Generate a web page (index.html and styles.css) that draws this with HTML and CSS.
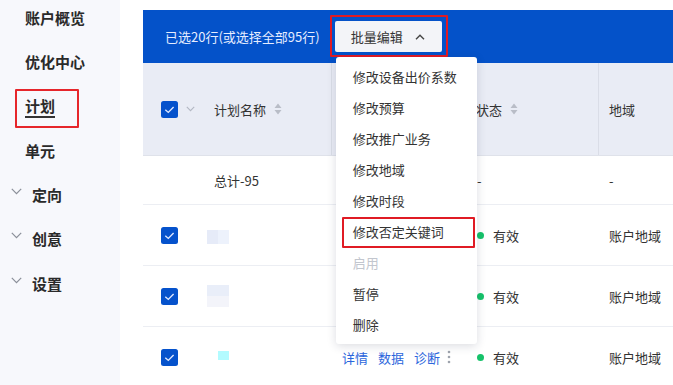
FILE: index.html
```html
<!DOCTYPE html>
<html lang="zh-CN">
<head>
<meta charset="utf-8">
<title>计划</title>
<link rel="stylesheet" href="styles.css">
</head>
<body>
<div class="app">
  <aside class="sidebar">
    <div class="nav-item">账户概览</div>
    <div class="nav-item">优化中心</div>
    <div class="nav-item"><span class="nav-label active">计划</span></div>
    <div class="nav-item">单元</div>
    <div class="nav-item group"><svg class="chev" width="11" height="7" viewBox="0 0 11 7"><path d="M0.8 0.8 L5.5 5.6 L10.2 0.8" fill="none" stroke="#8a8f99" stroke-width="1.2"/></svg>定向</div>
    <div class="nav-item group"><svg class="chev" width="11" height="7" viewBox="0 0 11 7"><path d="M0.8 0.8 L5.5 5.6 L10.2 0.8" fill="none" stroke="#8a8f99" stroke-width="1.2"/></svg>创意</div>
    <div class="nav-item group"><svg class="chev" width="11" height="7" viewBox="0 0 11 7"><path d="M0.8 0.8 L5.5 5.6 L10.2 0.8" fill="none" stroke="#8a8f99" stroke-width="1.2"/></svg>设置</div>
  </aside>

  <main class="main">
    <div class="toolbar">
      <span class="sel-text">已选20行(或选择全部95行)</span>
      <div class="batch">
        <button class="batch-btn">批量编辑<svg class="up" width="10" height="6" viewBox="0 0 10 6"><path d="M1 5.2 L5 1.2 L9 5.2" fill="none" stroke="#444" stroke-width="1.4"/></svg></button>
        <ul class="menu">
          <li class="menu-item">修改设备出价系数</li>
          <li class="menu-item">修改预算</li>
          <li class="menu-item">修改推广业务</li>
          <li class="menu-item">修改地域</li>
          <li class="menu-item">修改时段</li>
          <li class="menu-item marked">修改否定关键词</li>
          <li class="menu-item disabled">启用</li>
          <li class="menu-item">暂停</li>
          <li class="menu-item">删除</li>
        </ul>
      </div>
    </div>

    <div class="table">
      <div class="row head">
        <div class="cell check-cell">
          <svg class="cb" width="17" height="17" viewBox="0 0 17 17"><rect width="17" height="17" rx="2.5" fill="#0552cc"/><path d="M4.3 8.7 L7.3 11.4 L12.6 5.9" fill="none" stroke="#dfe8ff" stroke-width="1.4"/></svg>
          <svg class="cb-chev" width="9" height="6" viewBox="0 0 9 6"><path d="M0.8 0.8 L4.5 4.6 L8.2 0.8" fill="none" stroke="#b3b8c3" stroke-width="1.1"/></svg>
        </div>
        <div class="cell name divider">计划名称<svg class="sort" width="8" height="12" viewBox="0 0 8 12"><path d="M4 0.5 L7.5 5 H0.5 Z M4 11.5 L7.5 7 H0.5 Z" fill="#b9bdc7"/></svg></div>
        <div class="cell ops"></div>
        <div class="cell status divider"><span class="head-status">状态</span><svg class="sort" width="8" height="12" viewBox="0 0 8 12"><path d="M4 0.5 L7.5 5 H0.5 Z M4 11.5 L7.5 7 H0.5 Z" fill="#b9bdc7"/></svg></div>
        <div class="cell region">地域</div>
      </div>

      <div class="row total">
        <div class="cell check-cell"></div>
        <div class="cell name">总计-95</div>
        <div class="cell ops"></div>
        <div class="cell status">-</div>
        <div class="cell region">-</div>
      </div>

      <div class="row data">
        <div class="cell check-cell"><svg class="cb" width="17" height="17" viewBox="0 0 17 17"><rect width="17" height="17" rx="2.5" fill="#0552cc"/><path d="M4.3 8.7 L7.3 11.4 L12.6 5.9" fill="none" stroke="#dfe8ff" stroke-width="1.4"/></svg></div>
        <div class="cell name blurred"><span class="blur b1"></span></div>
        <div class="cell ops"></div>
        <div class="cell status"><span class="dot"></span>有效</div>
        <div class="cell region">账户地域</div>
      </div>

      <div class="row data">
        <div class="cell check-cell"><svg class="cb" width="17" height="17" viewBox="0 0 17 17"><rect width="17" height="17" rx="2.5" fill="#0552cc"/><path d="M4.3 8.7 L7.3 11.4 L12.6 5.9" fill="none" stroke="#dfe8ff" stroke-width="1.4"/></svg></div>
        <div class="cell name blurred"><span class="blur b2"></span></div>
        <div class="cell ops"></div>
        <div class="cell status"><span class="dot"></span>有效</div>
        <div class="cell region">账户地域</div>
      </div>

      <div class="row data">
        <div class="cell check-cell"><svg class="cb" width="17" height="17" viewBox="0 0 17 17"><rect width="17" height="17" rx="2.5" fill="#0552cc"/><path d="M4.3 8.7 L7.3 11.4 L12.6 5.9" fill="none" stroke="#dfe8ff" stroke-width="1.4"/></svg></div>
        <div class="cell name blurred"><span class="blur b3"></span></div>
        <div class="cell ops actions">
          <a class="act">详情</a><a class="act">数据</a><a class="act">诊断</a>
          <svg class="more" width="4" height="14" viewBox="0 0 4 14"><circle cx="2" cy="2" r="1.3" fill="#9ea3ad"/><circle cx="2" cy="7" r="1.3" fill="#9ea3ad"/><circle cx="2" cy="12" r="1.3" fill="#9ea3ad"/></svg>
        </div>
        <div class="cell status"><span class="dot"></span>有效</div>
        <div class="cell region">账户地域</div>
      </div>
    </div>
  </main>
</div>
</body>
</html>
```

FILE: styles.css
```css
* { box-sizing: border-box; }

html, body {
  margin: 0;
  padding: 0;
  background: #ffffff;
  font-family: "Noto Sans CJK SC", "Noto Sans", sans-serif;
  color: #333333;
  overflow: hidden;
}

.app {
  display: flex;
  width: 673px;
  height: 385px;
}

/* ---------- sidebar ---------- */
.sidebar {
  width: 120px;
  flex: none;
  background: #f7f8fc;
  display: flex;
  flex-direction: column;
  gap: 22.3px;
  padding-top: 7px;
}

.nav-item {
  height: 22px;
  line-height: 22px;
  padding-left: 25px;
  font-size: 15px;
  font-weight: 700;
  color: #2a2a2a;
  display: flex;
  align-items: center;
}

.nav-label.active {
  position: relative;
  display: inline-block;
  line-height: 20px;
  border-bottom: 2.5px solid #333333;
}

.nav-label.active::after {
  content: "";
  position: absolute;
  left: -10px;
  top: -7px;
  width: 60px;
  height: 35px;
  border: 2px solid #e6262b;
  border-radius: 1px;
}

.nav-item.group {
  padding-left: 11px;
}

.chev {
  margin-right: 10px;
  margin-top: -7px;
}

/* ---------- main ---------- */
.main {
  flex: 1;
  margin-left: 23px;
  padding-top: 10px;
  min-width: 0;
  position: relative;
}

.toolbar {
  height: 53px;
  background: #0452c9;
  display: flex;
  align-items: center;
  padding-left: 22px;
  position: relative;
  z-index: 2;
}

.sel-text {
  color: #e6edff;
  font-size: 13px;
}

.batch {
  position: relative;
  margin-left: 15px;
}

.batch-btn {
  position: relative;
  width: 107px;
  height: 31px;
  border: none;
  border-radius: 2px;
  background: #f3f4f8;
  color: #333333;
  font-family: inherit;
  font-size: 13px;
  display: flex;
  align-items: center;
  padding: 0 0 0 16px;
}

.batch-btn::after {
  content: "";
  position: absolute;
  left: -5px;
  top: -6px;
  right: -6px;
  bottom: -5px;
  border: 2px solid #e01b24;
  border-radius: 1px;
}

.up {
  margin-left: 12px;
}

.menu {
  position: absolute;
  left: 1px;
  top: 36px;
  width: 141px;
  margin: 0;
  padding: 4px 0;
  list-style: none;
  background: #ffffff;
  border-radius: 3px;
  box-shadow: 0 2px 10px rgba(30, 40, 70, 0.16);
}

.menu-item {
  height: 31px;
  line-height: 31px;
  padding-left: 17px;
  font-size: 13px;
  color: #333333;
  position: relative;
}

.menu-item.disabled {
  color: #c2c6ce;
}

.menu-item.marked::after {
  content: "";
  position: absolute;
  left: 6px;
  right: 2px;
  top: 1px;
  bottom: -1px;
  border: 2px solid #e01b24;
  border-radius: 1px;
}

/* ---------- table ---------- */
.table {
  display: flex;
  flex-direction: column;
}

.row {
  display: grid;
  grid-template-columns: 61px 128px 135px 132px 1fr;
  border-bottom: 1px solid #eceef3;
}

.cell {
  display: flex;
  align-items: center;
  padding-left: 10px;
  font-size: 13px;
  color: #333333;
}

.row.head {
  height: 93px;
  background: #e9ecf5;
  border-bottom: 1px solid #dfe2ea;
}

.row.head .cell.divider {
  border-right: 1.5px solid #dadde7;
}

.row.total {
  height: 49px;
}

.row.data {
  height: 61px;
}

.check-cell {
  padding-left: 18px;
}

.cb-chev {
  margin-left: 8px;
}

.sort {
  margin-left: 8px;
}

.head-status {
  margin-left: -1px;
}

.status .dot {
  width: 7px;
  height: 7px;
  border-radius: 50%;
  background: #16c26a;
  margin-right: 9px;
}

.region {
  padding-left: 10px;
}

.blurred {
  padding-left: 3px;
}

.blur {
  display: block;
  height: 14px;
}

.blur.b1 {
  width: 22px;
  background: linear-gradient(90deg, #e6ebf8 0 50%, #edf2fc 50% 100%);
  margin-top: 4px;
}

.blur.b2 {
  width: 22px;
  height: 22px;
  background: linear-gradient(180deg, #e9eef9 0 50%, #f3f4fa 50% 100%);
}

.blur.b3 {
  width: 11px;
  height: 9px;
  margin-left: 11px;
  background: #b2fbff;
  margin-top: -3px;
}

.actions {
  gap: 10px;
}

.act {
  color: #2b66dc;
  font-size: 13px;
  cursor: pointer;
}

.more {
  margin-left: -3px;
}
```
